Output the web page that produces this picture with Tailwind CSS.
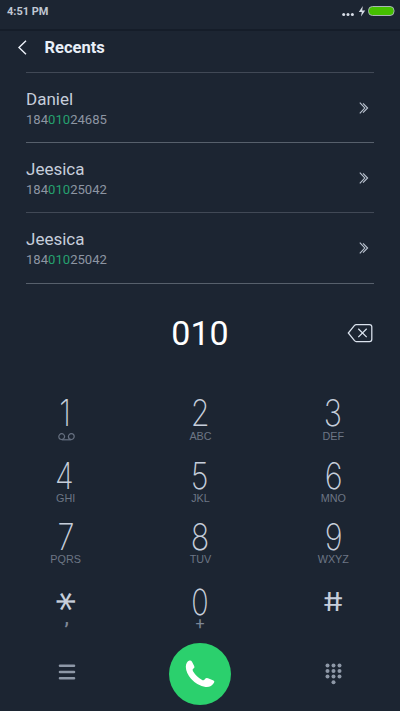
<!DOCTYPE html>
<html lang="en">
<head>
<meta charset="utf-8">
<title>Dialer</title>
<script src="https://cdn.jsdelivr.net/npm/@tailwindcss/browser@4"></script>
</head>
<body class="bg-[#1c2532]">
<main class="flex h-[711px] w-[400px] flex-col overflow-hidden bg-[#1c2532] font-['Roboto',sans-serif] text-[#c6cedb]">
  <header class="flex h-[31px] items-start justify-between border-b-2 border-[#151d29] pt-[5px] pr-[5px] pl-[7px]">
    <span class="text-[11px] leading-[14px] font-bold text-[#c0c7d3]">4:51 PM</span>
    <svg class="h-[14px] w-[54px]" viewBox="0 0 54 14">
      <g fill="#d7dde7"><circle cx="2.7" cy="9.4" r="1.5"/><circle cx="7" cy="9.4" r="1.5"/><circle cx="11.4" cy="9.4" r="1.5"/><path d="M21.8 1 17.8 7h3L20 11.5 24.2 5.4h-3z"/></g>
      <rect x="27.5" y="1.5" width="25.5" height="9" rx="4" fill="#45c000" stroke="#a7b6b4"/>
    </svg>
  </header>
  <nav class="mb-[7px] flex h-[34px] items-center pl-[17px]">
    <svg class="mr-[17.5px] h-[16px] w-[10px]" viewBox="0 0 10 16" fill="none" stroke="#edf2fa" stroke-width="1.4"><path d="M9 .7 2 7.500l7 6.800"/></svg>
    <h1 class="text-[16.5px] leading-[20px] font-bold text-[#e9eff8]">Recents</h1>
  </nav>
  <ul class="mr-[26px] ml-[26px] h-[212px] border-t border-[#414956]">
    <li class="flex h-[70px] items-center justify-between border-b border-[#57606c] pr-[5px]">
      <div class="pt-px"><p class="text-[17px] leading-[22px]">Daniel</p><p class="mt-px text-[13.1px] leading-[18px] text-[#8d95a2]">184<span class="text-[#25a16f]">010</span>24685</p></div>
      <svg class="h-[12px] w-[10px]" viewBox="0 0 10 12" fill="none" stroke="#bcc5d2" stroke-width="1.1"><path d="m.8.6 5 5.4-5 5.4M4 1.4 8.6 6 4 10.6"/></svg>
    </li>
    <li class="flex h-[70px] items-center justify-between border-b border-[#414956] pr-[5px]">
      <div class="pt-px"><p class="text-[17px] leading-[22px]">Jeesica</p><p class="mt-px text-[13.1px] leading-[18px] text-[#8d95a2]">184<span class="text-[#25a16f]">010</span>25042</p></div>
      <svg class="h-[12px] w-[10px]" viewBox="0 0 10 12" fill="none" stroke="#bcc5d2" stroke-width="1.1"><path d="m.8.6 5 5.4-5 5.4M4 1.4 8.6 6 4 10.6"/></svg>
    </li>
    <li class="flex h-[71px] items-center justify-between border-b border-[#57606c] pr-[5px]">
      <div><p class="text-[17px] leading-[22px]">Jeesica</p><p class="mt-px text-[13.1px] leading-[18px] text-[#8d95a2]">184<span class="text-[#25a16f]">010</span>25042</p></div>
      <svg class="h-[12px] w-[10px]" viewBox="0 0 10 12" fill="none" stroke="#bcc5d2" stroke-width="1.1"><path d="m.8.6 5 5.4-5 5.4M4 1.4 8.6 6 4 10.6"/></svg>
    </li>
  </ul>
  <section class="grid h-[97px] grid-cols-3 items-center">
    <output class="col-start-2 text-center text-[34px] leading-[40px] text-white">010</output>
    <svg class="mr-[27px] h-[20px] w-[26px] justify-self-end" viewBox="0 0 26 20" fill="none" stroke="#dbe3ee" stroke-width="1.25"><path d="M9.2 1.5h13.3q2.3 0 2.3 2.3v12.4q0 2.3-2.3 2.3H9.2q-1 0-1.7-.8L1.3 10l6.2-7.7q.7-.8 1.7-.8zM11.3 5.7l8.4 8.4M19.7 5.7l-8.4 8.4"/></svg>
  </section>
  <section class="grid grid-cols-3 pt-[14px] text-center">
    <button class="flex h-[62px] flex-col items-center pr-[2px]"><span class="h-[35px] scale-x-[.84] pr-[2px] font-['Inter'] text-[36.5px] leading-[36px] font-extralight">1</span>
      <svg class="mt-[3px] ml-[1px] h-[8px] w-[17px]" viewBox="0 0 17 8" fill="none" stroke="#667080" stroke-width="1.2"><circle cx="3.7" cy="3.6" r="2.9"/><circle cx="13.3" cy="3.6" r="2.9"/><path d="M3.7 6.8h9.6"/></svg></button>
    <button class="flex h-[62px] flex-col items-center"><span class="h-[35px] scale-x-[.84] font-['Inter'] text-[36.5px] leading-[36px] font-extralight">2</span><span class="pl-px font-['Liberation_Sans'] text-[10.8px] leading-[12px] text-[#6d7685]">ABC</span></button>
    <button class="flex h-[62px] flex-col items-center"><span class="h-[35px] scale-x-[.84] font-['Inter'] text-[36.5px] leading-[36px] font-extralight">3</span><span class="font-['Liberation_Sans'] text-[10.8px] leading-[12px] text-[#6d7685]">DEF</span></button>
    <button class="flex h-[61px] flex-col items-center pr-[2px]"><span class="h-[35px] scale-x-[.84] pr-[2px] font-['Inter'] text-[36.5px] leading-[38px] font-extralight">4</span><span class="font-['Liberation_Sans'] text-[10.8px] leading-[12px] text-[#6d7685]">GHI</span></button>
    <button class="flex h-[61px] flex-col items-center"><span class="h-[35px] scale-x-[.84] font-['Inter'] text-[36.5px] leading-[38px] font-extralight">5</span><span class="pl-px font-['Liberation_Sans'] text-[10.8px] leading-[12px] text-[#6d7685]">JKL</span></button>
    <button class="flex h-[61px] flex-col items-center"><span class="h-[35px] scale-x-[.84] font-['Inter'] text-[36.5px] leading-[38px] font-extralight">6</span><span class="font-['Liberation_Sans'] text-[10.8px] leading-[12px] text-[#6d7685]">MNO</span></button>
    <button class="flex h-[65px] flex-col items-center pr-[2px]"><span class="h-[35px] scale-x-[.84] font-['Inter'] text-[36.5px] leading-[38px] font-extralight">7</span><span class="font-['Liberation_Sans'] text-[10.8px] leading-[12px] text-[#6d7685]">PQRS</span></button>
    <button class="flex h-[65px] flex-col items-center"><span class="h-[35px] scale-x-[.84] font-['Inter'] text-[36.5px] leading-[38px] font-extralight">8</span><span class="pl-px font-['Liberation_Sans'] text-[10.8px] leading-[12px] text-[#6d7685]">TUV</span></button>
    <button class="flex h-[65px] flex-col items-center"><span class="h-[35px] scale-x-[.84] font-['Inter'] text-[36.5px] leading-[38px] font-extralight">9</span><span class="font-['Liberation_Sans'] text-[10.8px] leading-[12px] text-[#6d7685]">WXYZ</span></button>
    <button class="flex h-[57px] flex-col items-center"><span class="h-[37px] -translate-x-[8px] rotate-90 font-['Inter'] text-[45px] leading-[37px] font-light">*</span><span class="-mt-[8px] text-[20px] leading-[10px] font-medium text-[#7d8797]">,</span></button>
    <button class="flex h-[57px] flex-col items-center"><span class="h-[35px] scale-x-[.8] font-['Inter'] text-[36px] leading-[38px] font-extralight">0</span><span class="text-[16px] leading-[12px] text-[#7d8797]">+</span></button>
    <button class="flex h-[57px] flex-col items-center"><span class="h-[37px] scale-x-[1.22] skew-x-[8deg] font-['Inter'] text-[26px] leading-[38px] font-normal">#</span></button>
  </section>
  <footer class="grid h-[68px] grid-cols-3 items-center justify-items-center">
    <svg class="mb-[4px] h-[18px] w-[18px]" viewBox="0 0 18 18" stroke="#8e98a7" stroke-width="2.6" stroke-linecap="round"><path d="M2 2.7h14M2 9h14M2 15.3h14"/></svg>
    <button class="flex h-[62px] w-[62px] items-center justify-center rounded-full bg-[#2bd06d]">
      <svg class="h-[30px] w-[30px]" viewBox="0 0 30 30" fill="#fff"><path d="M4.500 1.600Q6 1.100 7 2.800L9.300 7.200Q10 8.700 8.200 9.700 7 10.500 8 12.200 11.500 18 17.500 21.200 19 21.800 19.800 20.300 21 18.500 23 19.200L28.500 21.400Q30 22.200 29 23.800 26.200 28.600 20.500 28 12.500 27 6 19.800 1 13.800.8 7.800 1 2.800 4.500 1.600z"/></svg>
    </button>
    <svg class="h-[22px] w-[17px]" viewBox="0 0 17 22" fill="#8e98a7"><circle cx="2.500" cy="2.500" r="2"/><circle cx="8.500" cy="2.500" r="2"/><circle cx="14.500" cy="2.500" r="2"/><circle cx="2.500" cy="8" r="2"/><circle cx="8.500" cy="8" r="2"/><circle cx="14.500" cy="8" r="2"/><circle cx="2.500" cy="13.500" r="2"/><circle cx="8.500" cy="13.500" r="2"/><circle cx="14.500" cy="13.500" r="2"/><circle cx="8.500" cy="19.300" r="2"/></svg>
  </footer>
</main>
</body>
</html>
